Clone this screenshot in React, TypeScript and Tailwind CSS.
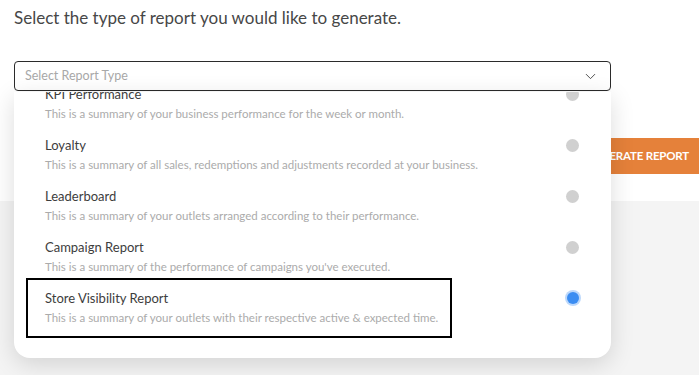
import React from 'react';
import { ChevronDown } from 'lucide-react';

interface ReportOption {
  title: string;
  description: string;
}

const options: ReportOption[] = [
  { title: 'KPI Performance', description: 'This is a summary of your business performance for the week or month.' },
  { title: 'Loyalty', description: 'This is a summary of all sales, redemptions and adjustments recorded at your business.' },
  { title: 'Leaderboard', description: 'This is a summary of your outlets arranged according to their performance.' },
  { title: 'Campaign Report', description: "This is a summary of the performance of campaigns you've executed." },
  { title: 'Store Visibility Report', description: 'This is a summary of your outlets with their respective active & expected time.' },
];

const selected = 'Store Visibility Report';

const OptionRow = ({ option }: { option: ReportOption }) => {
  const isSelected = option.title === selected;

  return (
    <div className="relative flex h-[51px] items-start justify-between pl-[31px] pr-[32px]">
      <div className="pt-[12px]">
        <div className="text-[13px] leading-[16px] text-[#3d3d3d]">{option.title}</div>
        <div className="mt-[5px] text-[11.5px] leading-[14px] text-[#ababab]">{option.description}</div>
      </div>
      {isSelected ? (
        <span className="mt-[14px] h-[12px] w-[12px] rounded-full bg-[#3b8df2] ring-2 ring-[#bcd8fb]" />
      ) : (
        <span className="mt-[14px] h-[13px] w-[13px] rounded-full bg-[#d0d0d0]" />
      )}
      {/* annotation round the chosen row */}
      {isSelected && (
        <div className="pointer-events-none absolute left-[12px] top-0 h-[60px] w-[426px] border-2 border-black" />
      )}
    </div>
  );
};

export default function App() {
  return (
    <div className="h-[375px] w-[699px] overflow-hidden bg-[#f4f4f4] font-['Lato',sans-serif]">
      <div className="h-[201px] bg-white">
        <h1 className="pl-[14px] pt-[6px] text-[17px] leading-[24px] text-[#474747]">
          Select the type of report you would like to generate.
        </h1>

        <div className="relative z-10 ml-[14px] mt-[31px] w-[597px]">
          <div className="flex h-[30px] items-center justify-between rounded-[4px] border border-[#2b2b2b] bg-white pl-[10px] pr-[11px]">
            <span className="text-[12.5px] text-[#a8a8a8]">Select Report Type</span>
            <ChevronDown size={17} strokeWidth={1.3} className="text-[#444]" />
          </div>

          <div className="absolute left-0 right-0 top-[31px] h-[266px] overflow-hidden rounded-b-[16px] bg-white shadow-[0_6px_24px_rgba(0,0,0,0.14)]">
            <div className="-mt-[18px]">
              {options.map((o) => (
                <OptionRow key={o.title} option={o} />
              ))}
            </div>
          </div>
        </div>

        <div className="mt-[47px] flex justify-end">
          <button className="h-[36px] bg-[#e5813a] pl-[14px] pr-[10px] text-[11.5px] font-bold tracking-[-0.2px] text-white">
            GENERATE REPORT
          </button>
        </div>
      </div>
    </div>
  );
}
